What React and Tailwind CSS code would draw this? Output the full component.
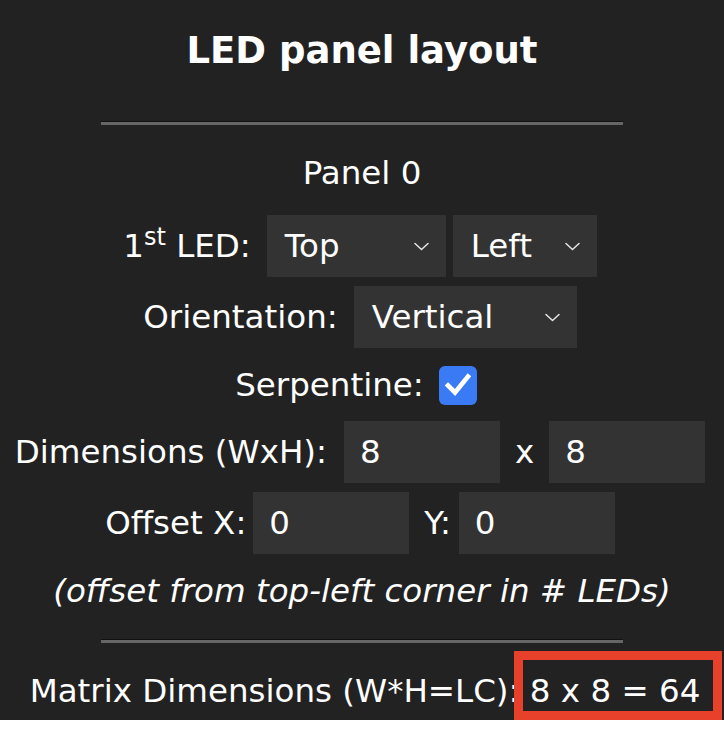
import React from "react";

/* small chevron used inside the dropdowns */
function Chevron() {
  return (
    <svg width="15" height="9" viewBox="0 0 15 9" fill="none">
      <path d="M1 1.5l6.5 6 6.5-6" stroke="#e6e6e6" strokeWidth="1.5" strokeLinecap="round" strokeLinejoin="round" />
    </svg>
  );
}

function Select({ value, width }) {
  return (
    <div className={`flex h-[62px] items-center justify-between bg-[#333333] pl-[18px] pr-[17px] ${width}`}>
      <span>{value}</span>
      <Chevron />
    </div>
  );
}

function Field({ value }) {
  return (
    <input
      readOnly
      defaultValue={value}
      className="h-[62px] w-[156px] bg-[#333333] px-[16px] text-white outline-none"
    />
  );
}

function Rule() {
  return <div className="mx-auto h-[4px] w-[522px] border-t-[1px] border-b-[3px] border-t-[#111111] border-b-[#666666]" />;
}

export default function App() {
  return (
    <div className="bg-white">
      <div className="flex h-[720px] flex-col bg-[#222222] pt-[28px] font-['DejaVu_Sans',sans-serif] text-[32.5px] text-white">
        {/* ── Title ── */}
        <h2 className="text-center text-[37px] leading-[46px] font-bold">LED panel layout</h2>

        <div className="mt-[47px]">
          <Rule />
        </div>

        <div className="mt-[28px] text-center leading-[40px]">Panel 0</div>

        {/* ── First LED ── */}
        <div className="mt-[22px] flex items-center justify-center pr-[4px]">
          <span className="mr-[16px]">
            1<sup className="text-[24px]">st</sup> LED:
          </span>
          <Select value="Top" width="w-[179px]" />
          <div className="ml-[7px]">
            <Select value="Left" width="w-[144px]" />
          </div>
        </div>

        {/* ── Orientation ── */}
        <div className="mt-[9px] flex items-center justify-center pr-[4px]">
          <span className="mr-[16px]">Orientation:</span>
          <Select value="Vertical" width="w-[223px]" />
        </div>

        {/* ── Serpentine ── */}
        <div className="mt-[9px] flex h-[56px] items-center justify-center pr-[12px]">
          <span className="mr-[15px]">Serpentine:</span>
          <div className="flex h-[39px] w-[38px] items-center justify-center rounded-[6px] bg-[#3a7af5]">
            <svg width="28" height="26" viewBox="0 0 28 26" fill="none">
              <path d="M4 13.5l7 7L24 4.5" stroke="white" strokeWidth="4.6" strokeLinecap="square" strokeLinejoin="miter" />
            </svg>
          </div>
        </div>

        {/* ── Dimensions ── */}
        <div className="mt-[8px] flex items-center justify-center pr-[4px]">
          <span className="mr-[17px]">Dimensions (WxH):</span>
          <Field value="8" />
          <span className="mx-[15px]">x</span>
          <Field value="8" />
        </div>

        {/* ── Offset ── */}
        <div className="mt-[9px] flex items-center justify-center pr-[4px]">
          <span className="mr-[7px]">Offset X:</span>
          <Field value="0" />
          <span className="ml-[15px] mr-[8px]">Y:</span>
          <Field value="0" />
        </div>

        <div className="mt-[17px] text-center leading-[40px] italic">(offset from top-left corner in # LEDs)</div>

        <div className="mt-[28px]">
          <Rule />
        </div>

        {/* ── Matrix summary ── */}
        <div className="mt-[28px] pl-[6px] text-center leading-[40px]">
          Matrix Dimensions (W*H=LC):{" "}
          <span className="relative">
            8 x 8 = 64
            <span className="pointer-events-none absolute -top-[21px] -bottom-[10px] -left-[16px] -right-[22px] border-[9px] border-[#e8412b]" />
          </span>
        </div>
      </div>
    </div>
  );
}
